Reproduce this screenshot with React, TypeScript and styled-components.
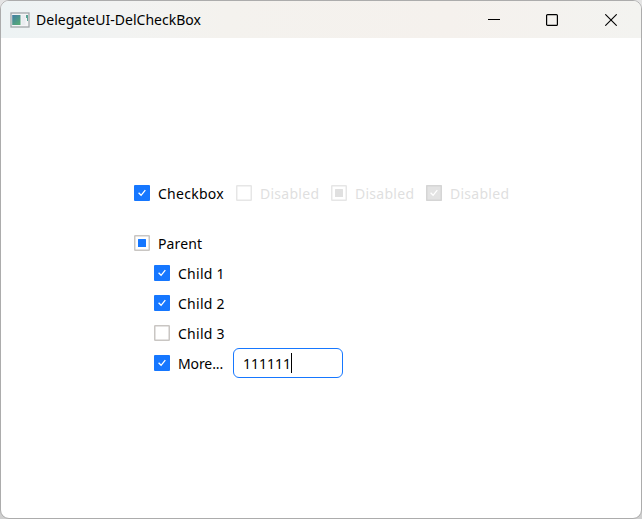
import React from "react";
import styled, { createGlobalStyle } from "styled-components";

type State = "on" | "off" | "partial";

const Global = createGlobalStyle`
  * { box-sizing: border-box; }
  body { margin: 0; background: #d9d9d9; overflow: hidden; }
`;

const Desktop = styled.div`
  width: 642px;
  height: 519px;
  background: linear-gradient(#e4e4e4 0 28px, #3d8fc8 28px 32px, #cfcfcf 32px);
`;

const Window = styled.div`
  display: flex;
  flex-direction: column;
  width: 642px;
  height: 519px;
  border: 1px solid #acacac;
  border-radius: 9px;
  overflow: hidden;
  background: #fff;
  font-family: "Noto Sans", "Open Sans", sans-serif;
  color: #000;
`;

const TitleBar = styled.header`
  display: flex;
  align-items: center;
  flex: none;
  height: 37px;
  padding-left: 9px;
  background: linear-gradient(90deg, #edf3f4 0, #f2f3f2 18%, #f4f2ee 35%, #f5f1ed 70%, #f3f3f0 100%);
`;

const Title = styled.h1`
  flex: 1;
  margin: 0 0 0 6px;
  font-size: 14px;
  line-height: 20px;
  font-weight: 400;
  letter-spacing: 0.02px;
  white-space: nowrap;
`;

const Controls = styled.div`
  display: grid;
  grid-template-columns: 58px 59px 12px;
  padding-right: 24px;
`;

const Control = styled.button`
  display: block;
  width: 12px;
  height: 12px;
  padding: 0;
  border: 0;
  background: none;
  svg { display: block; }
`;

const Content = styled.main`
  display: flex;
  flex-direction: column;
  gap: 20px;
  padding: 140px 0 0 133px;
`;

const Options = styled.div`
  display: flex;
  gap: 10px;
`;

const Tree = styled.div`
  display: flex;
  flex-direction: column;
`;

const Children = styled.div`
  display: flex;
  flex-direction: column;
  padding-left: 20px;
`;

const Line = styled.div`
  display: flex;
  height: 30px;
`;

const Option = styled.div<{ $width: number; $disabled?: boolean }>`
  display: flex;
  align-items: center;
  gap: 8px;
  width: ${(p) => p.$width}px;
  height: 30px;
  color: ${(p) => (p.$disabled ? "#dfdfdf" : "#000")};
  svg { display: block; flex: none; }
`;

const Label = styled.span<{ $spacing: number }>`
  padding-top: 2px;
  font-size: 14px;
  line-height: 20px;
  letter-spacing: ${(p) => p.$spacing}px;
  white-space: nowrap;
`;

const Field = styled.div`
  display: flex;
  align-items: center;
  width: 110px;
  height: 30px;
  padding-left: 9px;
  border: 1px solid #1677ff;
  border-radius: 6px;
`;

const Caret = styled.span`
  width: 1px;
  height: 20px;
  background: #000;
`;

const Box = ({ state, disabled }: { state: State; disabled?: boolean }) => {
  const accent = disabled ? "#e0e0e0" : "#1677ff";
  const edge = disabled ? "#e6e6e6" : "#c9c6c3";
  const filled = state === "on";
  return (
    <svg width="16" height="16" viewBox="0 0 16 16">
      {filled && <rect width="16" height="16" rx="1" fill={accent} />}
      {(!filled || disabled) && (
        <rect x=".75" y=".75" width="14.5" height="14.5" rx=".5" fill={filled ? "#e3e3e3" : "#fff"}
          stroke={filled ? "#d5d5d5" : edge} strokeWidth="1.5" />
      )}
      {filled && <path d="M4.6 7.8 7.1 10.3 11.3 5.2" fill="none" stroke="#fff" strokeWidth="1.3" />}
      {state === "partial" && <rect x="4" y="4" width="8" height="8" rx=".5" fill={accent} />}
    </svg>
  );
};

interface CheckProps { text: string; width: number; state: State; disabled?: boolean; spacing?: number }

const Check = ({ text, width, state, disabled, spacing = 0.27 }: CheckProps) => (
  <Option $width={width} $disabled={disabled}>
    <Box state={state} disabled={disabled} />
    <Label $spacing={spacing}>{text}</Label>
  </Option>
);

const AppIcon = () => (
  <svg width="20" height="16" viewBox="0 0 20 16">
    <defs>
      <linearGradient id="pane" x1="0" y1="0" x2=".7" y2="1">
        <stop offset="0" stopColor="#417da5" />
        <stop offset="1" stopColor="#56a978" />
      </linearGradient>
    </defs>
    <rect x="1" y="1" width="18" height="14" fill="#f4f5f6" stroke="#a1a6aa" strokeWidth="1.3" />
    <rect x="2.2" y="3" width="8.3" height="10" fill="url(#pane)" />
    <rect x="11.5" y="3" width="4" height="10" fill="#e9ecef" />
    <path d="M16 3h2v6h-1V6h-1z" fill="#58a393" />
  </svg>
);

export default function App() {
  return (
    <>
      <Global />
      <Desktop>
        <Window>
          <TitleBar>
            <AppIcon />
            <Title>DelegateUI-DelCheckBox</Title>
            <Controls>
              <Control aria-label="Minimize">
                <svg width="12" height="12"><path d="M0 5.5h12" stroke="#000" /></svg>
              </Control>
              <Control aria-label="Maximize">
                <svg width="12" height="12"><rect x=".6" y=".6" width="10.8" height="10.8" rx="1" fill="none" stroke="#000" strokeWidth="1.2" /></svg>
              </Control>
              <Control aria-label="Close">
                <svg width="12" height="12"><path d="m.3.3 11.4 11.4M11.7.3.3 11.7" stroke="#000" strokeWidth="1.1" /></svg>
              </Control>
            </Controls>
          </TitleBar>
          <Content>
            <Options>
              <Check text="Checkbox" width={92} state="on" />
              <Check text="Disabled" width={85} state="off" disabled />
              <Check text="Disabled" width={85} state="partial" disabled />
              <Check text="Disabled" width={85} state="on" disabled />
            </Options>
            <Tree>
              <Check text="Parent" width={80} state="partial" spacing={0.15} />
              <Children>
                <Check text="Child 1" width={79} state="on" />
                <Check text="Child 2" width={79} state="on" />
                <Check text="Child 3" width={79} state="off" />
                <Line>
                  <Check text="More..." width={79} state="on" spacing={-0.1} />
                  <Field><Label $spacing={0}>111111</Label><Caret /></Field>
                </Line>
              </Children>
            </Tree>
          </Content>
        </Window>
      </Desktop>
    </>
  );
}
